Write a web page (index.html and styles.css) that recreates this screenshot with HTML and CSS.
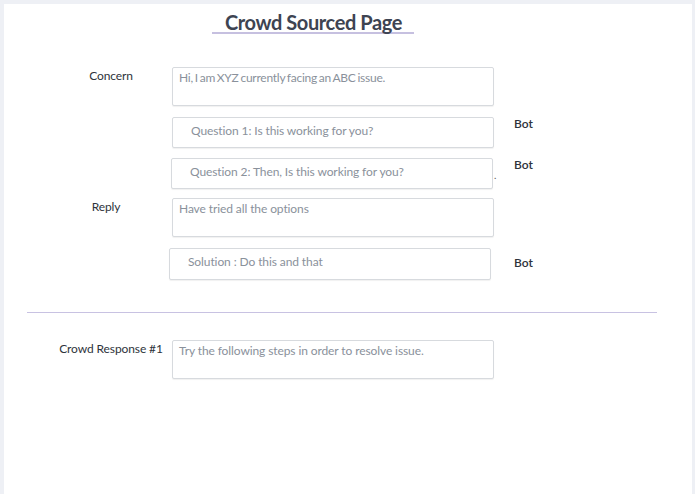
FILE: index.html
```html
<!DOCTYPE html>
<html lang="en">
<head>
<meta charset="utf-8">
<title>Crowd Sourced Page</title>
<link rel="stylesheet" href="styles.css">
</head>
<body>
<main class="card">
  <header class="head">
    <h1 class="title">Crowd Sourced Page</h1>
  </header>

  <section class="thread">
    <div class="row row-concern">
      <div class="label">Concern</div>
      <div class="box area tight">Hi, I am XYZ currently facing an ABC issue.</div>
    </div>

    <div class="row row-q1">
      <div class="label"></div>
      <div class="box line indent">Question 1: Is this working for you?</div>
      <div class="bot bot-top">Bot</div>
    </div>

    <div class="row row-q2">
      <div class="label"></div>
      <div class="box line indent shift-1">Question 2: Then, Is this working for you?</div>
      <span class="dot">.</span>
      <div class="bot bot-top">Bot</div>
    </div>

    <div class="row row-reply">
      <div class="label label-reply">Reply</div>
      <div class="box area">Have tried all the options</div>
    </div>

    <div class="row row-sol">
      <div class="label"></div>
      <div class="box line indent shift-3">Solution : Do this and that</div>
      <div class="bot bot-mid">Bot</div>
    </div>
  </section>

  <hr class="divider">

  <section class="thread crowd">
    <div class="row row-crowd">
      <div class="label">Crowd Response #1</div>
      <div class="box area">Try the following steps in order to resolve issue.</div>
    </div>
  </section>
</main>
</body>
</html>
```
FILE: styles.css
```css
html, body {
  margin: 0;
  padding: 0;
}
body {
  background: #eef0f5;
  font-family: Lato, "Open Sans", "Liberation Sans", sans-serif;
  height: 494px;
  overflow: hidden;
}
.card {
  display: block;
  background: #ffffff;
  margin: 4px 3px 0 4px;
  height: 490px;
}
.head {
  display: flex;
  justify-content: center;
  padding-top: 8px;
  padding-right: 70px;
}
.title {
  margin: 0;
  font-size: 20px;
  font-weight: 700;
  letter-spacing: -0.4px;
  color: #3e4452;
  line-height: 20px;
  padding: 0 12px 0 13px;
  border-bottom: 2px solid #c6c0e0;
}
.thread {
  display: flex;
  flex-direction: column;
  padding-top: 33px;
}
.row {
  display: flex;
  align-items: flex-start;
}
.label {
  width: 168px;
  flex: 0 0 168px;
  text-align: center;
  padding-top: 2px;
  padding-left: 46px;
  box-sizing: border-box;
  font-size: 12px;
  line-height: 14px;
  letter-spacing: -0.1px;
  color: #2e333b;
}
.label-reply {
  padding-left: 36px;
  padding-right: 0;
}
.box {
  box-sizing: border-box;
  width: 322px;
  border: 1px solid #d7dade;
  border-radius: 2px;
  background: #fff;
  box-shadow: 0 1px 1px rgba(0,0,0,0.06);
  color: #8a919b;
  font-size: 12px;
  line-height: 14px;
  letter-spacing: -0.1px;
}
.tight {
  letter-spacing: -0.25px;
  word-spacing: -1px;
}
.area {
  height: 39px;
  padding: 3px 7px 3px 6px;
}
.line {
  height: 31px;
  padding: 6px 7px;
}
.indent {
  padding-left: 18px;
}
.shift-1 { margin-left: -1px; }
.shift-3 { margin-left: -3px; height: 32px; padding-top: 6px; }
.bot {
  margin-left: 20px;
  font-size: 12px;
  line-height: 14px;
  font-weight: 600;
  color: #2e333b;
}
.bot-top { padding-top: 0; }
.bot-mid { align-self: center; margin-top: -2px; margin-left: 23px; }
.dot {
  width: 0;
  margin-left: 1px;
  padding-top: 12px;
  font-size: 10px;
  line-height: 10px;
  color: #555;
}
.row-q1 { margin-top: 11px; }
.row-q2 { margin-top: 10px; }
.row-reply { margin-top: 9px; }
.row-sol { margin-top: 11px; }
.divider {
  margin: 32px 35px 0 23px;
  border: 0;
  border-top: 1px solid #c8c2e2;
  height: 0;
}
.crowd {
  padding-top: 27px;
}
```
